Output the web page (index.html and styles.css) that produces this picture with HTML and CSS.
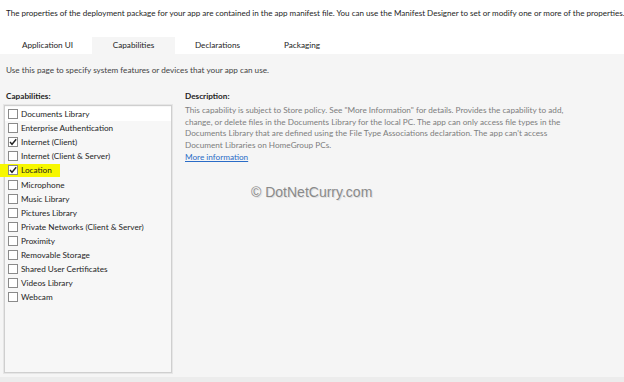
FILE: index.html
```html
<!DOCTYPE html>
<html>
<head>
    <meta charset="UTF-8">
    <title>Package.appxmanifest</title>
    <link rel="stylesheet" href="styles.css">
</head>
<body>
    <div id="designer">
        <div id="intro">The properties of the deployment package for your app are contained in the app manifest file. You can use the Manifest Designer to set or modify one or more of the properties.</div>
        <div id="tabs">
            <div class="tab tab-app">Application UI</div>
            <div class="tab tab-caps active">Capabilities</div>
            <div class="tab tab-decl">Declarations</div>
            <div class="tab tab-pack">Packaging</div>
        </div>
        <div id="panel">
            <div id="hint">Use this page to specify system features or devices that your app can use.</div>
            <div id="columns">
                <div id="caps">
                    <div class="label">Capabilities:</div>
                    <div id="cap-list">
                        <div class="cap focused"><span class="box"></span>Documents Library</div>
                        <div class="cap"><span class="box"></span>Enterprise Authentication</div>
                        <div class="cap"><span class="box checked"></span>Internet (Client)</div>
                        <div class="cap"><span class="box"></span>Internet (Client &amp; Server)</div>
                        <div class="cap"><span class="marker"><span class="box checked"></span>Location</span></div>
                        <div class="cap"><span class="box"></span>Microphone</div>
                        <div class="cap"><span class="box"></span>Music Library</div>
                        <div class="cap"><span class="box"></span>Pictures Library</div>
                        <div class="cap"><span class="box"></span>Private Networks (Client &amp; Server)</div>
                        <div class="cap"><span class="box"></span>Proximity</div>
                        <div class="cap"><span class="box"></span>Removable Storage</div>
                        <div class="cap"><span class="box"></span>Shared User Certificates</div>
                        <div class="cap"><span class="box"></span>Videos Library</div>
                        <div class="cap"><span class="box"></span>Webcam</div>
                    </div>
                </div>
                <div id="desc">
                    <div class="label">Description:</div>
                    <p id="desc-text">This capability is subject to Store policy. See "More Information" for details. Provides the capability to add, change, or delete files in the Documents Library for the local PC. The app can only access file types in the Documents Library that are defined using the File Type Associations declaration. The app can't access Document Libraries on HomeGroup PCs.</p>
                    <a href="#" id="more">More information</a>
                    <div id="watermark">© DotNetCurry.com</div>
                </div>
            </div>
        </div>
    </div>

    <script>
        // Tick mark for checked boxes
        const tick = '<svg width="8" height="8" viewBox="0 0 8 8"><path d="M1 4 L3 6.3 L7.2 1.2" fill="none" stroke="#222" stroke-width="1.4"/></svg>';
        document.querySelectorAll('.box.checked').forEach(function(b) {
            b.innerHTML = tick;
        });
    </script>
</body>
</html>
```

FILE: styles.css
```css
body {
    margin: 0;
    padding: 0;
    font-family: Lato, "Open Sans", sans-serif;
    font-size: 8.2px;
    color: #1e1e1e;
    background-color: #ffffff;
    overflow: hidden;
}
#designer {
    width: 624px;
    height: 382px;
    display: flex;
    flex-direction: column;
}
#intro {
    padding: 7px 0 0 6px;
    height: 37px;
    font-size: 8.05px;
    line-height: 12px;
    box-sizing: border-box;
    white-space: nowrap;
}
#tabs {
    display: flex;
    padding-left: 3px;
    height: 17px;
}
.tab {
    text-align: center;
    line-height: 17px;
    color: #1e1e1e;
}
.tab-app { width: 89px; }
.tab-caps { width: 83px; }
.tab-decl { width: 85px; }
.tab-pack { width: 84px; }
.tab.active {
    background-color: #f5f5f5;
}
#panel {
    flex: 1;
    background-color: #f5f5f5;
    border-bottom: 5px solid #ececec;
    padding-top: 10px;
    display: flex;
    flex-direction: column;
}
#hint {
    padding-left: 6px;
    color: #444;
    line-height: 12px;
    margin-bottom: 14px;
}
#columns {
    flex: 1;
    display: flex;
}
#caps {
    width: 176px;
    display: flex;
    flex-direction: column;
}
.label {
    font-weight: bold;
    padding-left: 6px;
    height: 12px;
    line-height: 12px;
}
#cap-list {
    margin: 3px 0 4px 4px;
    width: 168px;
    flex: 1;
    box-sizing: border-box;
    border: 1px solid #cfcfcf;
    box-shadow: 0 0 0 1px #e6e6e6;
    background-color: #f7f7f7;
    padding-top: 1px;
}
.cap {
    height: 14.1px;
    display: flex;
    align-items: center;
    padding-left: 3px;
    white-space: nowrap;
    color: #1e1e1e;
}
.cap.focused {
    background-color: #ffffff;
}
.marker {
    display: flex;
    align-items: center;
    height: 13px;
    margin-left: -8px;
    padding-left: 8px;
    padding-right: 8px;
    background-color: #f7f700;
}
.box {
    width: 8px;
    height: 8px;
    border: 1px solid #8a8a8a;
    background-color: #fff;
    margin-right: 3px;
    display: flex;
    align-items: center;
    justify-content: center;
    flex-shrink: 0;
}
.box svg {
    display: block;
}
#desc {
    flex: 1;
    position: relative;
}
#desc .label {
    padding-left: 9px;
}
#desc-text {
    margin: 3px 0 0 0;
    padding-left: 9px;
    width: 386px;
    color: #7d7d7d;
    line-height: 11.7px;
}
#more {
    display: inline-block;
    margin-left: 9px;
    line-height: 10px;
    color: #2a6cc7;
    text-decoration: underline;
}
#watermark {
    position: absolute;
    left: 75px;
    top: 94px;
    font-family: "Liberation Sans", Arial, sans-serif;
    font-size: 14px;
    color: #8a8a8a;
    text-shadow: 1px 1px 0 #e0e0e0;
}
```
